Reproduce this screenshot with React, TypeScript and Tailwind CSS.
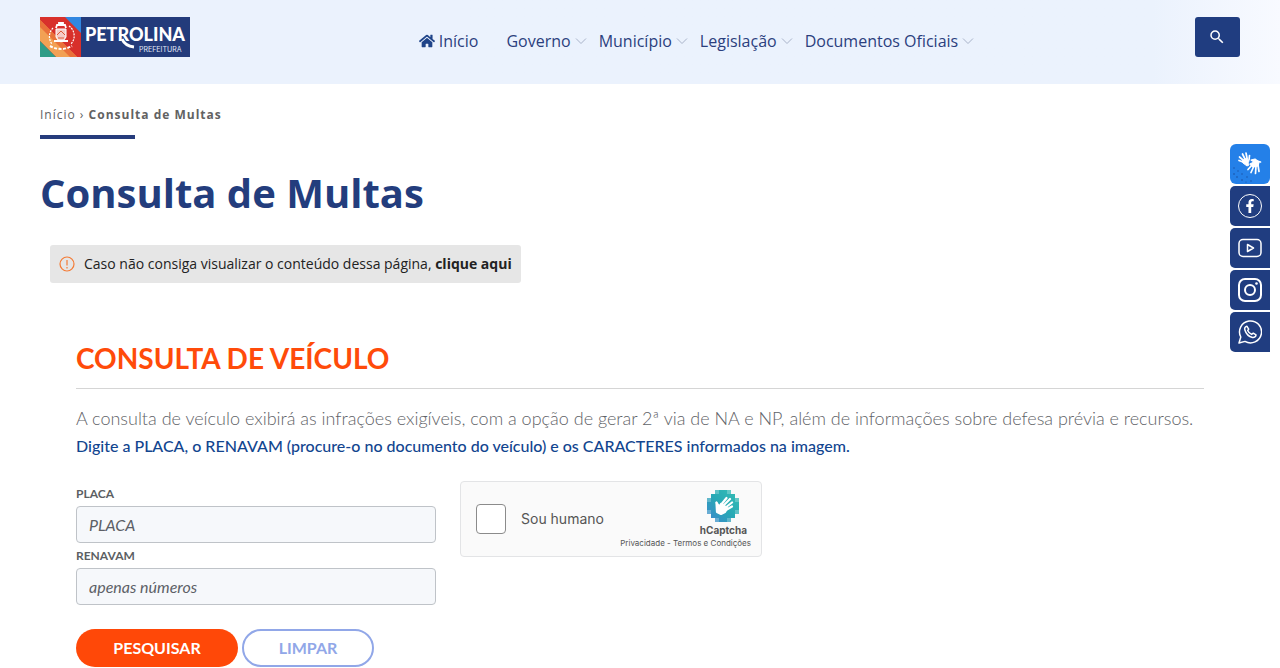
import type { ReactNode } from 'react';
import { FaHome, FaFacebookF } from 'react-icons/fa';
import { MdSearch } from 'react-icons/md';

const menuItems = ['Governo', 'Município', 'Legislação', 'Documentos Oficiais'];

function Logo() {
  return (
    <svg width="150" height="40" viewBox="0 0 150 40" role="img" aria-label="Petrolina Prefeitura">
      <rect width="150" height="40" fill="#233b7b" />
      <rect width="41" height="40" fill="#d8302b" />
      <path d="M0 0V24L16 40H37L0 3Z" fill="#f2a154" />
      <path d="M0 3L37 40H30L0 10Z" fill="#e9713a" />
      <path d="M25 0H41V16Z" fill="#3187e0" />
      <path d="M0 24L16 40H0Z" fill="#2f9c87" />
      <g fill="none" stroke="#fff">
        <path d="M13 11A12 12 0 0 0 12 27" strokeWidth="1.2" strokeDasharray="2 1" />
        <path d="M29 9A12 12 0 0 1 31 27" strokeWidth="1.2" strokeDasharray="2 1" />
        <path d="M10 29Q21 35 32 29" strokeWidth="2" strokeDasharray="3 1.5" />
        <path d="M16 12H26V20Q25 23 21 25Q17 23 16 20Z" fill="#fff" fillOpacity=".75" strokeWidth="1" />
        <path d="M16 11L17 8H25L26 11M19 8V6H23V8M14 24H28" strokeWidth="1.8" />
      </g>
      <path d="M17 18L21 14L25 18M18 21H24" stroke="#dd5b3a" fill="none" />
      <text x="45" y="24" fill="#fff" fontFamily="Lato, sans-serif" fontWeight="900" fontSize="18">PETROLINA</text>
      <path d="M82 22Q85 29 94 30" stroke="#fff" strokeWidth="3" fill="none" />
      <text x="99" y="35" fill="#e4eaf8" fontFamily="Inter, sans-serif" fontSize="7">PREFEITURA</text>
    </svg>
  );
}

function Chevron() {
  return (
    <svg className="h-3 w-3" viewBox="0 0 12 12" fill="none" stroke="#a9b3c9" aria-hidden="true">
      <path d="M1 3.5L6 8.5L11 3.5" />
    </svg>
  );
}

function Header() {
  return (
    <header className="flex h-[84px] items-start justify-between bg-linear-to-r from-[#ebf2fd] from-90% to-[#f8faff] px-10 pt-[17px]">
      <a href="#"><Logo /></a>
      <nav className="mt-3 ml-2 flex items-center gap-3 text-base text-[#2b3f7e]">
        <a href="#" className="mr-4 flex items-center gap-1">
          <FaHome className="h-4 w-4 text-[#1f4489]" />
          Início
        </a>
        {menuItems.map((item) => (
          <a key={item} href="#" className="flex items-center gap-1">
            {item}
            <Chevron />
          </a>
        ))}
      </nav>
      <button type="button" aria-label="Buscar" className="flex h-10 w-[45px] items-center justify-center rounded-[3px] bg-[#203d80] text-white">
        <MdSearch className="h-[18px] w-[18px]" />
      </button>
    </header>
  );
}

function SignLanguageIcon() {
  return (
    <svg width="40" height="40" viewBox="0 0 40 40" fill="none" stroke="#fff" strokeLinecap="round" strokeLinejoin="round" aria-hidden="true">
      <g fill="#1b4fa0" stroke="none">
        <circle cx="4" cy="24" r=".7" /><circle cx="8" cy="27" r=".7" /><circle cx="4" cy="30" r=".8" />
        <circle cx="12" cy="30" r=".7" /><circle cx="7" cy="33" r=".8" /><circle cx="17" cy="33" r=".7" />
        <circle cx="12" cy="36" r=".8" /><circle cx="21" cy="37" r=".7" /><circle cx="16" cy="38" r=".6" />
      </g>
      <path d="M13 16L17 14L19 17L18 19L19 21L17 22L13 19Z" fill="#fff" />
      <path d="M13 18L9 16.500M13 16L9.500 13M15 15L12.500 10M17 14L16 9M19 16L19.500 11.500" strokeWidth="1.700" />
      <path d="M21 16L25 15L29 18L28 22L23 23L20 20L24 18Z" fill="#fff" strokeWidth="1.200" />
      <path d="M22 21L18 25.500M24 22L21 28.500M26 22L25.500 29.500M28 21L29 27.500M27 17L30.500 18" strokeWidth="1.700" />
    </svg>
  );
}

function SocialLink({ label, children }: { label: string; children: ReactNode }) {
  return (
    <a href="#" aria-label={label} className="flex h-10 w-10 items-center justify-center rounded-l-[5px] bg-[#203d80] text-white">
      {children}
    </a>
  );
}

function SocialBar() {
  return (
    <aside className="absolute top-36 right-[10px] flex flex-col gap-[2px]">
      <button type="button" aria-label="Libras" className="h-10 w-10 rounded-[6px] bg-[#2480e8]">
        <SignLanguageIcon />
      </button>
      <SocialLink label="Facebook">
        <span className="flex h-6 w-6 items-center justify-center rounded-full border border-white">
          <FaFacebookF className="h-[14px] w-[14px]" />
        </span>
      </SocialLink>
      <SocialLink label="YouTube">
        <svg width="24" height="24" viewBox="0 0 24 24" fill="none" stroke="currentColor" strokeWidth="1.5" strokeLinejoin="round">
          <rect x="1" y="3.500" width="22" height="17" rx="4" />
          <path d="M9.500 8.500L15.500 12L9.500 15.500Z" />
        </svg>
      </SocialLink>
      <SocialLink label="Instagram">
        <svg width="24" height="24" viewBox="0 0 24 24" fill="none" stroke="currentColor" strokeWidth="2">
          <rect x="1" y="1" width="22" height="22" rx="6" />
          <circle cx="12" cy="12" r="5" />
          <circle cx="18.500" cy="5.500" r="1.300" fill="currentColor" stroke="none" />
        </svg>
      </SocialLink>
      <SocialLink label="WhatsApp">
        <svg width="24" height="24" viewBox="0 0 24 24" fill="none" stroke="currentColor" strokeWidth="1.500" strokeLinejoin="round">
          <path d="M1 23L2.800 17A11 11 0 1 1 7 21.400Z" />
          <path d="M8.800 6.200C7 6.600 6.300 8.200 6.900 10C8 13.600 11.200 16.700 14.500 17.400C16.300 17.700 18 16.600 18 14.900L15.300 13.200L13.600 14.400C11.900 13.700 10.400 12.200 9.700 10.500L10.700 9.100Z" />
        </svg>
      </SocialLink>
    </aside>
  );
}

function CaptchaLogo() {
  return (
    <svg width="32" height="32" viewBox="0 0 32 32" aria-hidden="true">
      <defs>
        <linearGradient id="captcha" x1="0" y1="1" x2="1" y2="0">
          <stop offset="0" stopColor="#3f86cf" />
          <stop offset=".5" stopColor="#28a9b5" />
          <stop offset="1" stopColor="#35bfb5" />
        </linearGradient>
      </defs>
      <path d="M8 0H24V4H28V8H32V24H28V28H24V32H8V28H4V24H0V8H4V4H8Z" fill="url(#captcha)" opacity=".75" />
      <path d="M12 0H20V4H28V12H32V20H28V28H20V32H12V28H4V20H0V12H4V4H12Z" fill="url(#captcha)" />
      <g stroke="#fff" strokeWidth="2.200" strokeLinecap="round" strokeLinejoin="round">
        <path d="M12 17L9.500 12.500M13 16L19.500 8M16 16L23 9M18 18L25 12.500M19 20L25 16.500" fill="none" />
        <path d="M9.500 13L12 17L14 14L20 18L18 22L14 24L10 22Z" fill="#fff" />
      </g>
    </svg>
  );
}

function Captcha() {
  return (
    <div className="flex h-[76px] w-[302px] items-center rounded-[4px] border border-[#e3e4e6] bg-[#fafafa] pr-[10px] pl-[15px] font-[Inter,sans-serif] text-[#555]">
      <input id="humano" type="checkbox" className="h-[30px] w-[30px] appearance-none rounded-[4px] border border-[#8b8b8b] bg-white" />
      <label htmlFor="humano" className="ml-[15px] text-sm">Sou humano</label>
      <div className="-ml-5 flex flex-1 flex-col items-end">
        <div className="flex flex-col items-center pr-1">
          <CaptchaLogo />
          <span className="text-[10px] leading-4 font-bold">hCaptcha</span>
        </div>
        <p className="text-[8px] leading-[10px] whitespace-nowrap">
          <a href="#">Privacidade</a> - <a href="#">Termos e Condições</a>
        </p>
      </div>
    </div>
  );
}

interface FieldProps {
  id: string;
  label: string;
  placeholder: string;
}

function Field({ id, label, placeholder }: FieldProps) {
  return (
    <div>
      <label htmlFor={id} className="block text-xs leading-[25px] font-bold text-[#5c5f63]">{label}</label>
      <input
        id={id}
        type="text"
        placeholder={placeholder}
        className="block h-[37px] w-full rounded-[4px] border border-[#bfc3c8] bg-[#f6f8fb] px-3 text-base placeholder:text-[#5c6066] placeholder:italic"
      />
    </div>
  );
}

function VehicleForm() {
  return (
    <section className="mx-9 mt-[57px] font-[Lato,sans-serif]">
      <h2 className="border-b border-[#d5d5d5] pb-3 text-[28px] leading-9 font-bold text-[#ff4b0a]">CONSULTA DE VEÍCULO</h2>
      <p className="mt-[15px] text-lg leading-7 font-light text-[#5f6368]">
        A consulta de veículo exibirá as infrações exigíveis, com a opção de gerar 2ª via de NA e NP, além de informações sobre defesa prévia e recursos.
      </p>
      <p className="text-base leading-7 font-medium text-[#12458f]">
        Digite a PLACA, o RENAVAM (procure-o no documento do veículo) e os CARACTERES informados na imagem.
      </p>
      <form className="mt-[21px]">
        <div className="flex items-start gap-6">
          <div className="w-[360px]">
            <Field id="placa" label="PLACA" placeholder="PLACA" />
            <Field id="renavam" label="RENAVAM" placeholder="apenas números" />
          </div>
          <Captcha />
        </div>
        <div className="mt-6 flex gap-1 text-base font-bold">
          <button type="submit" className="h-[38px] w-[162px] rounded-full bg-[#ff4808] text-white">PESQUISAR</button>
          <button type="reset" className="h-[38px] w-[132px] rounded-full border-2 border-[#91a7e8] text-[#91a7e8]">LIMPAR</button>
        </div>
      </form>
    </section>
  );
}

export default function App() {
  return (
    <div className="relative bg-white font-['Open_Sans',sans-serif]">
      <Header />
      <SocialBar />
      <main className="px-10 pt-[21px]">
        <div className="text-xs leading-5 tracking-[1px] text-[#626262]">
          <a href="#">Início</a> › <strong>Consulta de Multas</strong>
        </div>
        <div className="mt-[10px] h-1 w-[95px] bg-[#263c7c]" />
        <h1 className="mt-[29px] text-[40px] leading-[50px] font-bold text-[#233d7d]">Consulta de Multas</h1>
        <div className="mt-[27px] ml-[10px] flex h-[38px] w-fit items-center gap-[9px] rounded-[3px] bg-[#e6e6e6] px-[9px] text-sm text-[#222]">
          <svg width="16" height="16" viewBox="0 0 16 16" fill="none" stroke="#f47b35" strokeWidth="1.200" aria-hidden="true">
            <circle cx="8" cy="8" r="7" />
            <path d="M8 4V9.500M8 11V12.500" />
          </svg>
          <p>
            Caso não consiga visualizar o conteúdo dessa página, <a href="#" className="font-bold">clique aqui</a>
          </p>
        </div>
        <VehicleForm />
      </main>
    </div>
  );
}
